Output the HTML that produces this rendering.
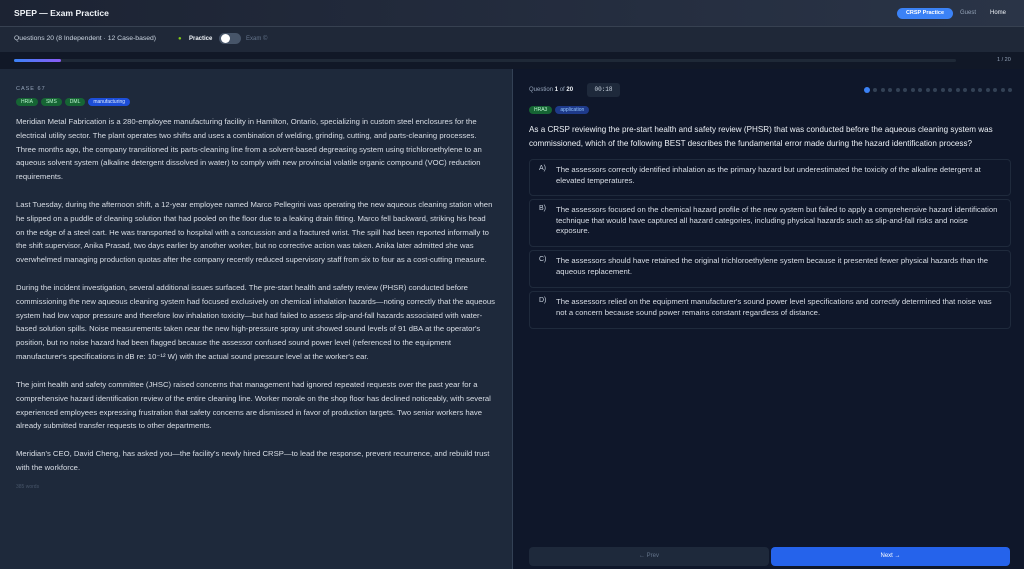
<!DOCTYPE html>
<html><head><meta charset="utf-8"><style>
*{margin:0;padding:0;box-sizing:border-box}
body{width:1024px;height:569px;overflow:hidden;background:#0f172a;font-family:"Liberation Sans",sans-serif;color:#e2e8f0;position:relative}
.hdr{position:absolute;left:0;top:0;width:1024px;height:27px;background:linear-gradient(90deg,#1c2333,#2a3447);border-bottom:1px solid #374151}
.hdr .t{position:absolute;left:14px;top:8px;font-size:8.6px;font-weight:bold;color:#f1f5f9}
.pill{position:absolute;left:897px;top:8px;width:56px;height:11px;border-radius:6px;background:#3b82f6;color:#fff;font-size:5.5px;font-weight:bold;text-align:center;line-height:11px}
.sub{position:absolute;left:0;top:27px;width:1024px;height:25px;background:#1f2838}
.sub span{position:absolute;top:9px;font-size:6px;color:#cbd5e1}
.prog{position:absolute;left:0;top:52px;width:1024px;height:17px;background:#111827}
.left{position:absolute;left:0;top:69px;width:512px;height:500px;background:#1e293b}
.right{position:absolute;left:512px;top:69px;width:512px;height:500px;background:#0f172a;border-left:1px solid #334155}
.tag{display:inline-block;height:8px;border-radius:4px;font-size:5px;line-height:8px;padding:0 5px;margin-right:3px;vertical-align:top}
.g{background:#166534;color:#bbf7d0}.b{background:#1d4ed8;color:#dbeafe}.b2{background:#1e3a8a;color:#93c5fd}
.para{position:absolute;left:16px;font-size:7.7px;line-height:13.8px;color:#d9dee6;white-space:nowrap}
.opt{position:absolute;left:529px;width:482px;border:1px solid #1f2a3c;border-radius:4px;background:#0f172a}
.opt .l{position:absolute;left:9px;top:5px;font-size:7px;color:#cbd5e1}
.opt .x{position:absolute;left:26px;top:5px;font-size:7.7px;line-height:10.5px;color:#d9dee6;white-space:nowrap}
.dot{position:absolute;top:88px;width:4px;height:4px;border-radius:2px;background:#334155}
</style></head><body>
<div class="hdr"><div class="t">SPEP — Exam Practice</div>
<div class="pill">CRSP Practice</div>
<span style="position:absolute;left:960px;top:10px;font-size:6px;color:#94a3b8">Guest</span>
<span style="position:absolute;left:990px;top:10px;font-size:6px;color:#f1f5f9">Home</span></div>
<div class="sub"><span style="left:14px;font-size:6.8px;top:8px">Questions 20 (8 Independent · 12 Case-based)</span>
<span style="left:178px;color:#84cc16">●</span><span style="left:189px;font-weight:bold;color:#f1f5f9">Practice</span>
<span style="left:246px;color:#64748b">Exam ©</span></div>
<div style="position:absolute;left:219px;top:33px;width:22px;height:11px;border-radius:6px;background:#475569"></div>
<div style="position:absolute;left:221px;top:34px;width:9px;height:9px;border-radius:5px;background:#fff"></div>
<div class="prog"><div style="position:absolute;left:14px;top:7px;width:942px;height:3px;background:#1f2937;border-radius:2px"></div>
<div style="position:absolute;left:14px;top:7px;width:47px;height:3px;background:linear-gradient(90deg,#3b82f6,#8b5cf6);border-radius:2px"></div>
<span style="position:absolute;left:997px;top:5px;font-size:5.5px;color:#94a3b8">1 / 20</span></div>
<div class="left">
<div style="position:absolute;left:16px;top:17px;font-size:5.5px;letter-spacing:1px;color:#94a3b8">CASE 67</div>
<div style="position:absolute;left:16px;top:29px"><span class="tag g">HRIA</span><span class="tag g">SMS</span><span class="tag g">DML</span><span class="tag b">manufacturing</span></div>
</div>
<div class="para" style="top:115px">Meridian Metal Fabrication is a 280-employee manufacturing facility in Hamilton, Ontario, specializing in custom steel enclosures for the<br>electrical utility sector. The plant operates two shifts and uses a combination of welding, grinding, cutting, and parts-cleaning processes.<br>Three months ago, the company transitioned its parts-cleaning line from a solvent-based degreasing system using trichloroethylene to an<br>aqueous solvent system (alkaline detergent dissolved in water) to comply with new provincial volatile organic compound (VOC) reduction<br>requirements.</div>
<div class="para" style="top:198px">Last Tuesday, during the afternoon shift, a 12-year employee named Marco Pellegrini was operating the new aqueous cleaning station when<br>he slipped on a puddle of cleaning solution that had pooled on the floor due to a leaking drain fitting. Marco fell backward, striking his head<br>on the edge of a steel cart. He was transported to hospital with a concussion and a fractured wrist. The spill had been reported informally to<br>the shift supervisor, Anika Prasad, two days earlier by another worker, but no corrective action was taken. Anika later admitted she was<br>overwhelmed managing production quotas after the company recently reduced supervisory staff from six to four as a cost-cutting measure.</div>
<div class="para" style="top:281px">During the incident investigation, several additional issues surfaced. The pre-start health and safety review (PHSR) conducted before<br>commissioning the new aqueous cleaning system had focused exclusively on chemical inhalation hazards—noting correctly that the aqueous<br>system had low vapor pressure and therefore low inhalation toxicity—but had failed to assess slip-and-fall hazards associated with water-<br>based solution spills. Noise measurements taken near the new high-pressure spray unit showed sound levels of 91 dBA at the operator's<br>position, but no noise hazard had been flagged because the assessor confused sound power level (referenced to the equipment<br>manufacturer's specifications in dB re: 10⁻¹² W) with the actual sound pressure level at the worker's ear.</div>
<div class="para" style="top:378px">The joint health and safety committee (JHSC) raised concerns that management had ignored repeated requests over the past year for a<br>comprehensive hazard identification review of the entire cleaning line. Worker morale on the shop floor has declined noticeably, with several<br>experienced employees expressing frustration that safety concerns are dismissed in favor of production targets. Two senior workers have<br>already submitted transfer requests to other departments.</div>
<div class="para" style="top:447px">Meridian's CEO, David Cheng, has asked you—the facility's newly hired CRSP—to lead the response, prevent recurrence, and rebuild trust<br>with the workforce.</div>
<div style="position:absolute;left:16px;top:484px;font-size:5px;color:#475569">385 words</div>
<div class="right"></div>
<div style="position:absolute;left:529px;top:87px;font-size:6px;color:#94a3b8">Question <b style="color:#f1f5f9">1</b> of <b style="color:#f1f5f9">20</b></div>
<div style="position:absolute;left:587px;top:83px;width:33px;height:14px;border-radius:3px;background:#1e293b;font-size:6px;color:#cbd5e1;text-align:center;line-height:14px;font-family:'Liberation Mono',monospace">00:18</div>
<div class="dot" style="left:864px;top:87px;width:6px;height:6px;border-radius:3px;background:#3b82f6"></div>
<div style="position:absolute;left:529px;top:106px"><span class="tag g">HRA3</span><span class="tag b2">application</span></div>
<div style="position:absolute;left:529px;top:123px;font-size:8.1px;line-height:14px;color:#eef2f7;white-space:nowrap">As a CRSP reviewing the pre-start health and safety review (PHSR) that was conducted before the aqueous cleaning system was<br>commissioned, which of the following BEST describes the fundamental error made during the hazard identification process?</div>
<div class="opt" style="top:159px;height:37px"><span class="l">A)</span><div class="x">The assessors correctly identified inhalation as the primary hazard but underestimated the toxicity of the alkaline detergent at<br>elevated temperatures.</div></div>
<div class="opt" style="top:199px;height:48px"><span class="l">B)</span><div class="x">The assessors focused on the chemical hazard profile of the new system but failed to apply a comprehensive hazard identification<br>technique that would have captured all hazard categories, including physical hazards such as slip-and-fall risks and noise<br>exposure.</div></div>
<div class="opt" style="top:250px;height:38px"><span class="l">C)</span><div class="x">The assessors should have retained the original trichloroethylene system because it presented fewer physical hazards than the<br>aqueous replacement.</div></div>
<div class="opt" style="top:291px;height:38px"><span class="l">D)</span><div class="x">The assessors relied on the equipment manufacturer's sound power level specifications and correctly determined that noise was<br>not a concern because sound power remains constant regardless of distance.</div></div>
<div style="position:absolute;left:529px;top:547px;width:240px;height:19px;border-radius:4px;background:#1e293b;font-size:6px;color:#64748b;text-align:center;line-height:19px">← Prev</div>
<div style="position:absolute;left:771px;top:547px;width:239px;height:19px;border-radius:4px;background:#2563eb;font-size:6px;color:#fff;text-align:center;line-height:19px">Next →</div>
<div class="dot" style="left:873px"></div><div class="dot" style="left:880.5px"></div><div class="dot" style="left:888px"></div><div class="dot" style="left:895.5px"></div><div class="dot" style="left:903px"></div><div class="dot" style="left:910.5px"></div><div class="dot" style="left:918px"></div><div class="dot" style="left:925.5px"></div><div class="dot" style="left:933px"></div><div class="dot" style="left:940.5px"></div><div class="dot" style="left:948px"></div><div class="dot" style="left:955.5px"></div><div class="dot" style="left:963px"></div><div class="dot" style="left:970.5px"></div><div class="dot" style="left:978px"></div><div class="dot" style="left:985.5px"></div><div class="dot" style="left:993px"></div><div class="dot" style="left:1000.5px"></div><div class="dot" style="left:1008px"></div>
</body></html>
